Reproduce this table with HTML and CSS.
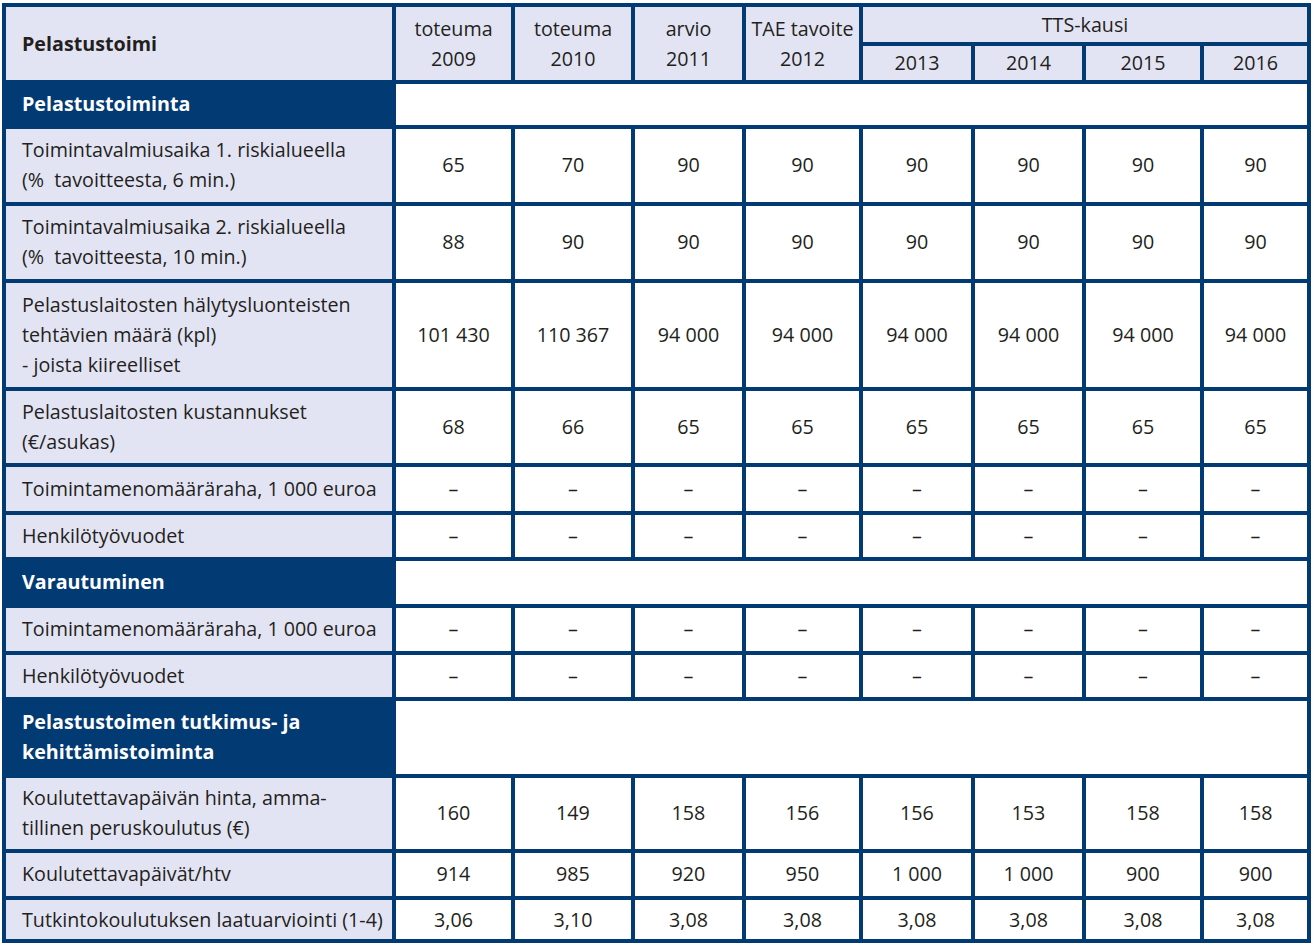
FILE: index.html
```html
<!DOCTYPE html>
<html lang="fi">
<head>
<meta charset="utf-8">
<title>Pelastustoimi</title>
<link rel="stylesheet" href="styles.css">
</head>
<body>
<table class="tbl">
  <colgroup>
    <col class="c-label">
    <col class="c-a">
    <col class="c-b">
    <col class="c-c">
    <col class="c-d">
    <col class="c-e">
    <col class="c-f">
    <col class="c-g">
    <col class="c-h">
  </colgroup>
  <thead>
    <tr class="head-top">
      <th rowspan="2" class="title">Pelastustoimi</th>
      <th rowspan="2">toteuma<br>2009</th>
      <th rowspan="2">toteuma<br>2010</th>
      <th rowspan="2">arvio<br>2011</th>
      <th rowspan="2">TAE tavoite<br>2012</th>
      <th colspan="4" class="tts">TTS-kausi</th>
    </tr>
    <tr class="head-years">
      <th>2013</th>
      <th>2014</th>
      <th>2015</th>
      <th>2016</th>
    </tr>
  </thead>
  <tbody>
    <tr class="section tighter">
      <th class="sec">Pelastustoiminta</th>
      <td colspan="8" class="blank"></td>
    </tr>
    <tr>
      <th>Toimintavalmiusaika 1. riskialueella<br>(%&nbsp; tavoitteesta, 6 min.)</th>
      <td>65</td><td>70</td><td>90</td><td>90</td><td>90</td><td>90</td><td>90</td><td>90</td>
    </tr>
    <tr>
      <th>Toimintavalmiusaika 2. riskialueella<br>(%&nbsp; tavoitteesta, 10 min.)</th>
      <td>88</td><td>90</td><td>90</td><td>90</td><td>90</td><td>90</td><td>90</td><td>90</td>
    </tr>
    <tr class="roomy">
      <th>Pelastuslaitosten hälytysluonteisten<br>tehtävien määrä (kpl)<br>- joista kiireelliset</th>
      <td>101 430</td><td>110 367</td><td>94 000</td><td>94 000</td><td>94 000</td><td>94 000</td><td>94 000</td><td>94 000</td>
    </tr>
    <tr class="tight">
      <th>Pelastuslaitosten kustannukset<br>(€/asukas)</th>
      <td>68</td><td>66</td><td>65</td><td>65</td><td>65</td><td>65</td><td>65</td><td>65</td>
    </tr>
    <tr class="roomy">
      <th>Toimintamenomääräraha, 1 000 euroa</th>
      <td>–</td><td>–</td><td>–</td><td>–</td><td>–</td><td>–</td><td>–</td><td>–</td>
    </tr>
    <tr class="tight">
      <th>Henkilötyövuodet</th>
      <td>–</td><td>–</td><td>–</td><td>–</td><td>–</td><td>–</td><td>–</td><td>–</td>
    </tr>
    <tr class="section">
      <th class="sec">Varautuminen</th>
      <td colspan="8" class="blank"></td>
    </tr>
    <tr>
      <th>Toimintamenomääräraha, 1 000 euroa</th>
      <td>–</td><td>–</td><td>–</td><td>–</td><td>–</td><td>–</td><td>–</td><td>–</td>
    </tr>
    <tr class="tight">
      <th>Henkilötyövuodet</th>
      <td>–</td><td>–</td><td>–</td><td>–</td><td>–</td><td>–</td><td>–</td><td>–</td>
    </tr>
    <tr class="section">
      <th class="sec">Pelastustoimen tutkimus- ja<br>kehittämistoiminta</th>
      <td colspan="8" class="blank"></td>
    </tr>
    <tr class="tighter">
      <th>Koulutettavapäivän hinta, amma-<br>tillinen peruskoulutus (€)</th>
      <td>160</td><td>149</td><td>158</td><td>156</td><td>156</td><td>153</td><td>158</td><td>158</td>
    </tr>
    <tr>
      <th>Koulutettavapäivät/htv</th>
      <td>914</td><td>985</td><td>920</td><td>950</td><td>1 000</td><td>1 000</td><td>900</td><td>900</td>
    </tr>
    <tr class="last">
      <th>Tutkintokoulutuksen laatuarviointi (1-4)</th>
      <td>3,06</td><td>3,10</td><td>3,08</td><td>3,08</td><td>3,08</td><td>3,08</td><td>3,08</td><td>3,08</td>
    </tr>
  </tbody>
</table>
</body>
</html>
```

FILE: styles.css
```css
html, body {
  margin: 0;
  padding: 0;
  background: #ffffff;
}

body {
  padding: 3px 0 0 2px;
  font-family: "Open Sans", "Noto Sans", sans-serif;
  color: #231f20;
}

.tbl {
  border-collapse: collapse;
  table-layout: fixed;
  width: 1309px;
  font-size: 19.7px;
  line-height: 30px;
}

.c-label { width: 390px; }
.c-a { width: 119px; }
.c-b { width: 120px; }
.c-c { width: 111px; }
.c-d { width: 117px; }
.c-e { width: 112px; }
.c-f { width: 111px; }
.c-g { width: 118px; }
.c-h { width: 107px; }

.tbl th,
.tbl td {
  border: 4px solid #023a73;
  padding: 6px 0 7px;
  vertical-align: middle;
  font-weight: normal;
  white-space: nowrap;
}

.tbl td {
  text-align: center;
  background: #ffffff;
}

.tbl tbody th {
  text-align: left;
  padding-left: 16px;
  background: #e3e4f3;
}

.tbl thead th {
  background: #e3e4f3;
  text-align: center;
  padding: 0;
}

.tbl thead th.title {
  text-align: left;
  padding-left: 16px;
  font-weight: bold;
}

.head-top th.tts {
  height: 35px;
  line-height: 30px;
}

.head-years th {
  height: 34px;
  line-height: 30px;
}

.tbl tbody th.sec {
  background: #023a73;
  color: #ffffff;
  font-weight: bold;
}

.tbl .roomy th,
.tbl .roomy td {
  padding-top: 7px;
  padding-bottom: 7px;
}

.tbl .tight th,
.tbl .tight td {
  padding-top: 6px;
  padding-bottom: 6px;
}

.tbl .tighter th,
.tbl .tighter td {
  padding-top: 5px;
  padding-bottom: 6px;
}

.tbl .last th,
.tbl .last td {
  padding-top: 5px;
  padding-bottom: 4px;
}

.tbl td.blank {
  background: #ffffff;
}
```
